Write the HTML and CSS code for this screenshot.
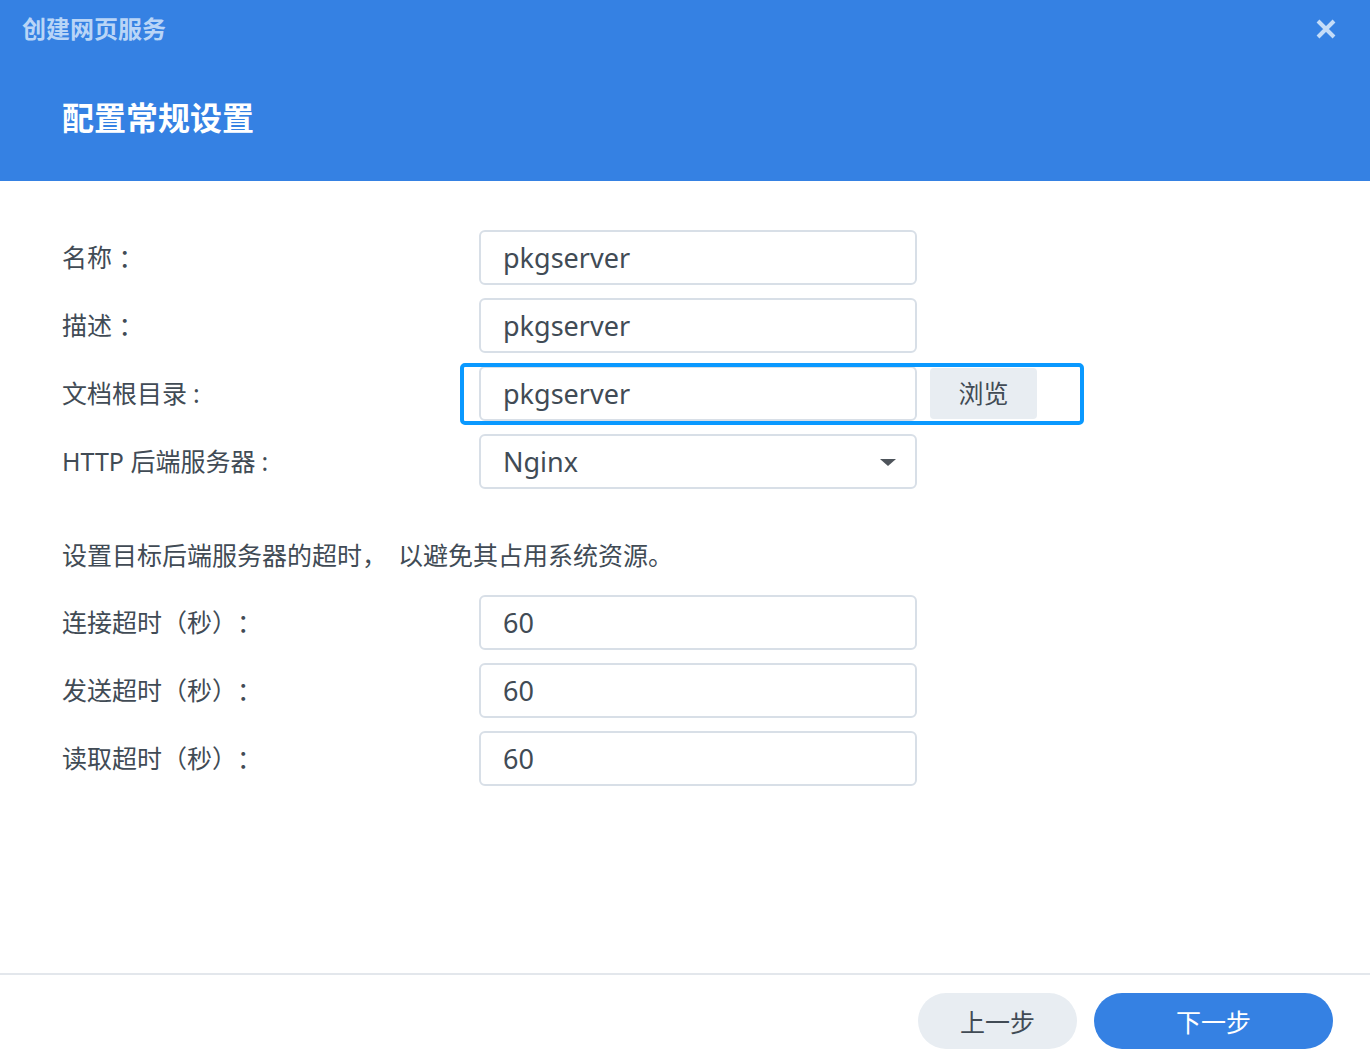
FILE: index.html
```html
<!DOCTYPE html>
<html lang="zh">
<head>
<meta charset="utf-8">
<link rel="stylesheet" href="styles.css">
</head>
<body>
<div class="dialog">
  <header class="header">
    <div class="topbar">
      <div class="app-title">创建网页服务</div>
      <svg class="close" width="22" height="22" viewBox="0 0 22 22"><path d="M3 3 L19 19 M19 3 L3 19" stroke="#c4dcf8" stroke-width="4" stroke-linecap="butt"/></svg>
    </div>
    <h1 class="step-title">配置常规设置</h1>
  </header>
  <main class="content">
    <div class="form">
      <div class="row"><label class="label">名称 <span class="punct">：</span></label><div class="input">pkgserver</div></div>
      <div class="row"><label class="label">描述 <span class="punct">：</span></label><div class="input">pkgserver</div></div>
      <div class="row focus-row"><label class="label">文档根目录<span class="colon">:</span></label>
        <div class="field-with-btn">
          <div class="input">pkgserver</div>
          <div class="browse">浏览</div>
          <div class="highlight"></div>
        </div>
      </div>
      <div class="row"><label class="label">HTTP 后端服务器<span class="colon">:</span></label><div class="input select">Nginx<span class="caret"></span></div></div>
    </div>
    <p class="desc">设置目标后端服务器的超时<span class="punct comma">，</span>以避免其占用系统资源。</p>
    <div class="form">
      <div class="row"><label class="label">连接超时（秒）<span class="punct">：</span></label><div class="input">60</div></div>
      <div class="row"><label class="label">发送超时（秒）<span class="punct">：</span></label><div class="input">60</div></div>
      <div class="row"><label class="label">读取超时（秒）<span class="punct">：</span></label><div class="input">60</div></div>
    </div>
  </main>
  <footer class="footer">
    <button class="btn btn-prev">上一步</button>
    <button class="btn btn-next">下一步</button>
  </footer>
</div>
</body>
</html>
```
FILE: styles.css
```css
html, body {
  margin: 0;
  padding: 0;
  background: #ffffff;
}
body {
  font-family: "Noto Sans", "Noto Sans CJK SC", sans-serif;
  color: #414b55;
  text-spacing-trim: space-all;
}
.dialog {
  width: 1370px;
  height: 1064px;
  display: flex;
  flex-direction: column;
}
.header {
  background: #3581e3;
  height: 181px;
  box-sizing: border-box;
}
.topbar {
  height: 60px;
  display: flex;
  align-items: center;
  justify-content: space-between;
  padding: 0 33px 0 22px;
}
.app-title {
  font-size: 24px;
  font-weight: 700;
  color: #b9d5f7;
  line-height: 1;
  margin-top: -2px;
}
.close {
  display: block;
  margin-top: -2px;
}
.step-title {
  margin: 0;
  padding: 42px 0 0 62px;
  font-size: 32px;
  font-weight: 700;
  color: #ffffff;
  line-height: 1;
}
.content {
  flex: 1;
  padding: 49px 0 0 62px;
}
.form {
  display: flex;
  flex-direction: column;
  gap: 13px;
}
.row {
  display: grid;
  grid-template-columns: 417px auto;
  align-items: center;
}
.label {
  font-size: 25px;
  color: #414b55;
  margin-bottom: 3px;
}
.punct {
  font-family: "Noto Sans CJK TC", "Noto Sans CJK SC", sans-serif;
}
.comma {
  margin-right: 11px;
}
.colon {
  margin-left: 6px;
}
.input {
  width: 438px;
  height: 55px;
  box-sizing: border-box;
  border: 2px solid #d8dfe7;
  border-radius: 6px;
  padding: 0 0 0 22px;
  font-size: 27px;
  line-height: 51px;
  color: #414b55;
  background: #fff;
  position: relative;
}
.select .caret {
  position: absolute;
  right: 19px;
  top: 23px;
  width: 0;
  height: 0;
  border-left: 8px solid transparent;
  border-right: 8px solid transparent;
  border-top: 7px solid #4e545b;
}
.field-with-btn {
  display: flex;
  gap: 13px;
  position: relative;
}
.browse {
  width: 107px;
  height: 51px;
  margin-top: 2px;
  background: #e8edf2;
  border-radius: 4px;
  font-size: 25px;
  line-height: 51px;
  text-align: center;
  color: #414b55;
}
.highlight {
  position: absolute;
  left: -19px;
  top: -3px;
  width: 624px;
  height: 62px;
  box-sizing: border-box;
  border: 4px solid #0a99ff;
  border-radius: 5px;
  pointer-events: none;
}
.desc {
  margin: 48px 0 23px 0;
  font-size: 25px;
  line-height: 34px;
  color: #414b55;
}
.footer {
  border-top: 2px solid #e3e7ec;
  height: 91px;
  box-sizing: border-box;
  display: flex;
  justify-content: flex-end;
  align-items: flex-start;
  gap: 17px;
  padding: 18px 37px 0 0;
}
.btn {
  height: 56px;
  border: none;
  border-radius: 28px;
  font-family: "Noto Sans", "Noto Sans CJK SC", sans-serif;
  font-size: 25px;
  padding: 0;
  cursor: pointer;
}
.btn-prev {
  width: 159px;
  background: #e8edf2;
  color: #414b55;
}
.btn-next {
  width: 239px;
  background: #3581e3;
  color: #ffffff;
}
```
